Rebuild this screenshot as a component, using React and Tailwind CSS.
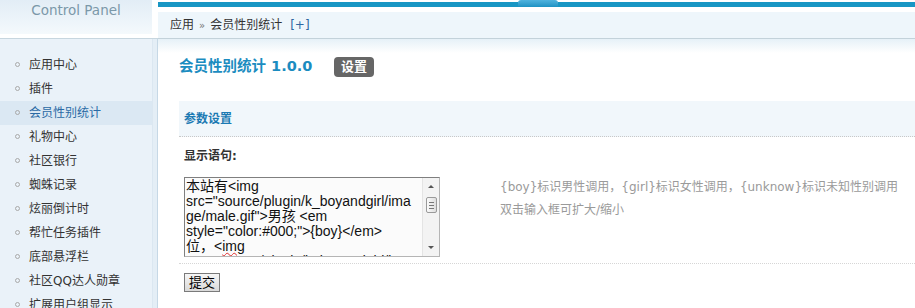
const items = [
  '应用中心',
  '插件',
  '会员性别统计',
  '礼物中心',
  '社区银行',
  '蜘蛛记录',
  '炫丽倒计时',
  '帮忙任务插件',
  '底部悬浮栏',
  '社区QQ达人勋章',
  '扩展用户组显示',
];

export default function App() {
  return (
    <div className="w-[915px] h-[308px] overflow-hidden flex bg-white text-[12px] text-[#333] font-['DejaVu_Sans','Noto_Sans_CJK_SC',sans-serif]">
      {/* Sidebar */}
      <aside className="w-[152px] shrink-0 flex flex-col bg-[#eaf2f9]">
        <div className="h-[39px] shrink-0 flex flex-col bg-white border-b border-[#c7d6df]">
          <div className="h-[34px] bg-gradient-to-b from-[#e2edf6] to-[#f4f9fc] flex justify-center leading-[20px] text-[13.5px] text-[#7b98a9]">
            Control Panel
          </div>
        </div>
        <ul className="pt-[14px]">
          {items.map((t, i) => {
            const sel = i === 2;
            return (
              <li
                key={t}
                className={
                  'h-[24px] flex items-center pl-[15px] ' +
                  (sel ? 'bg-[#dbe8f3] text-[#2a6aa5]' : 'text-[#333]')
                }
              >
                <span className="w-[5px] h-[5px] rounded-full border border-[#a9a9a9] -mt-[2px]" />
                <span className="ml-[9px]">{t}</span>
              </li>
            );
          })}
        </ul>
      </aside>

      {/* border strip */}
      <div className="w-[6px] shrink-0 flex flex-col">
        <div className="h-[39px] bg-white border-b border-[#c7d6df]" />
        <div className="flex-1 bg-[#e4eef6] border-l border-[#dbe7f1] border-r border-r-[#c6d8e6]" />
      </div>

      {/* Main */}
      <main className="flex-1 min-w-0 flex flex-col">
        <div className="h-[7px] shrink-0 flex">
          <div className="w-[360px] flex flex-col">
            <div className="h-[2px] bg-white" />
            <div className="flex-1 bg-[#1896c4]" />
          </div>
          <div className="w-[40px] rounded-t-[3px] bg-gradient-to-b from-[#4fb3de] to-[#1a92c3]" />
          <div className="flex-1 flex flex-col">
            <div className="h-[2px] bg-white" />
            <div className="flex-1 bg-[#1896c4]" />
          </div>
        </div>
        <div className="h-[5px] shrink-0" />
        <div className="h-[27px] shrink-0 bg-[#eef6fb] border-b border-[#c3d2da] flex items-center pl-[12px] text-[#333]">
          <span>应用</span>
          <span className="mx-[5px] text-[10px] text-[#777]">»</span>
          <span>会员性别统计</span>
          <span className="ml-[8px] text-[#2f67a0]">[+]</span>
        </div>

        <div className="flex-1 bg-[linear-gradient(#e6f1f8,#ffffff_14px)]">
          {/* Title */}
          <div className="mt-[18px] ml-[21px] h-[20px] flex items-center">
            <span className="w-[155px] text-[14.5px] font-bold text-[#1b8cc0] whitespace-nowrap">
              会员性别统计 1.0.0
            </span>
            <span className="w-[40px] h-[20px] rounded-[4px] bg-[#666] text-white font-bold text-[13px] flex items-center justify-center">
              设置
            </span>
          </div>

          {/* Section header */}
          <div className="mt-[24px] ml-[21px] h-[36px] bg-[#f1f7fb] border-b border-dotted border-[#c8c8c8] flex items-center pl-[5px] text-[#1c7ab3] font-bold">
            参数设置
          </div>

          {/* Label */}
          <div className="h-[40px] pl-[26px] pt-[12px] leading-[14px] font-bold text-[#333]">
            显示语句:
          </div>

          {/* Row */}
          <div className="ml-[21px] pl-[5px] pb-[6px] flex border-b border-dotted border-[#d6d6d6]">
            <div className="w-[256px] h-[80px] shrink-0 border border-[#7f7f7f] border-r-[#b5b5b5] border-b-[#b5b5b5] bg-[#fbfbfb] flex overflow-hidden">
              <div className="flex-1 pl-[1px] pt-[1px] text-[14px] leading-[15px] text-[#111] whitespace-nowrap overflow-hidden font-['Liberation_Sans','Noto_Sans_CJK_SC',sans-serif]">
                <div>本站有&lt;img</div>
                <div>src="source/plugin/k_boyandgirl/ima</div>
                <div>ge/male.gif"&gt;男孩 &lt;em</div>
                <div>style="color:#000;"&gt;{'{boy}'}&lt;/em&gt;</div>
                <div>
                  位，&lt;
                  <span className="underline decoration-wavy decoration-[#e03030] decoration-1">img</span>
                </div>
                <div>src="source/plugin/k_boyandgirl/ima</div>
              </div>
              <div className="w-[17px] shrink-0 bg-[#f3f3f3] border-l border-[#e4e4e4] flex flex-col items-center">
                <div className="mt-[7px] w-0 h-0 border-x-[3px] border-x-transparent border-b-[3px] border-b-[#555]" />
                <div className="mt-[9px] w-[11px] h-[16px] border border-[#9a9a9a] rounded-[2px] bg-gradient-to-r from-[#fafafa] to-[#dedede] flex flex-col items-center justify-center gap-[2px]">
                  <div className="w-[5px] h-[1px] bg-[#777]" />
                  <div className="w-[5px] h-[1px] bg-[#777]" />
                  <div className="w-[5px] h-[1px] bg-[#777]" />
                </div>
                <div className="flex-1" />
                <div className="mb-[7px] w-0 h-0 border-x-[3px] border-x-transparent border-t-[3px] border-t-[#555]" />
              </div>
            </div>
            <div className="ml-[60px] text-[#9a9a9a] whitespace-nowrap">
              <div className="h-[20px] leading-[20px]">
                {'{boy}'}标识男性调用，{'{girl}'}标识女性调用，{'{unknow}'}标识未知性别调用
              </div>
              <div className="mt-[3px] h-[20px] leading-[20px]">双击输入框可扩大/缩小</div>
            </div>
          </div>

          {/* Submit */}
          <div className="ml-[26px] mt-[9px]">
            <button className="w-[36px] h-[19px] border border-[#7a7a7a] bg-gradient-to-b from-[#f6f6f6] to-[#d9d9d9] text-[13px] leading-[17px] text-black flex items-center justify-center">
              提交
            </button>
          </div>
        </div>
      </main>
    </div>
  );
}
